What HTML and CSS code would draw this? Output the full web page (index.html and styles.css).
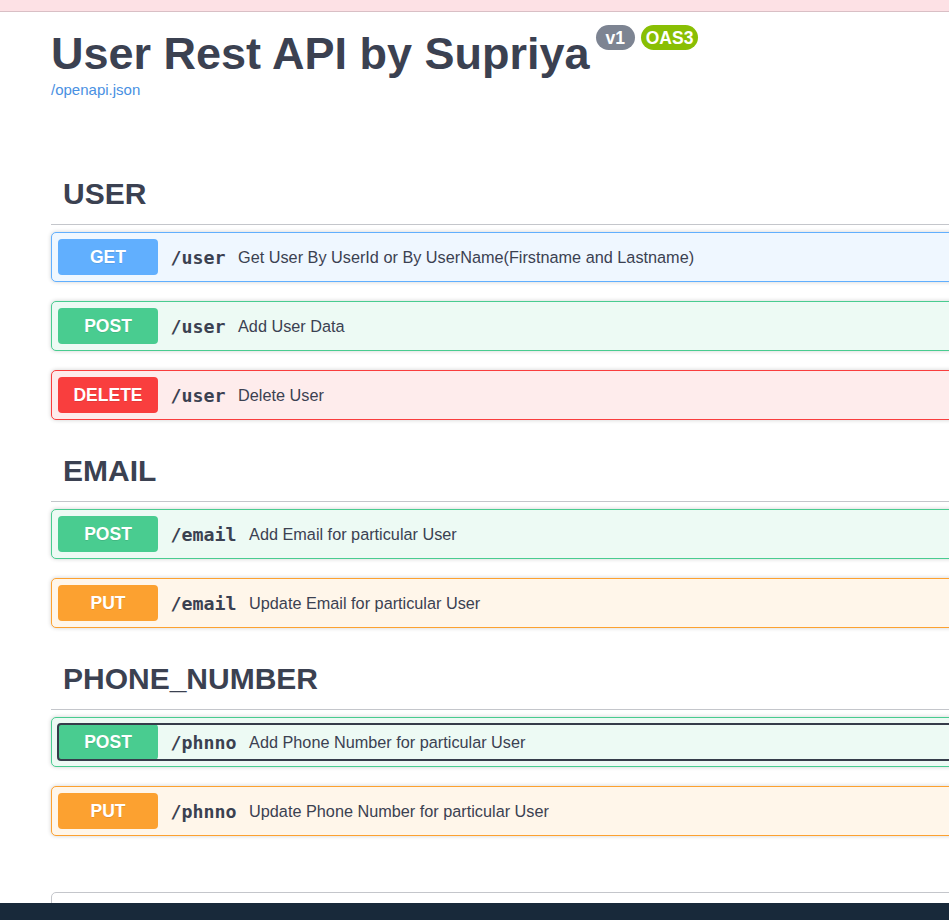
FILE: index.html
```html
<!DOCTYPE html>
<html lang="en">
<head>
<meta charset="utf-8">
<title>User Rest API by Supriya</title>
<link rel="stylesheet" href="styles.css">
</head>
<body>
<div class="topband"></div>
<div class="wrapper">
  <div class="info">
    <h2 class="title"><span class="title-text">User Rest API by Supriya</span><span class="stamp stamp-version"> v1 </span><span class="stamp stamp-oas">OAS3</span></h2>
    <a class="url" href="#">/openapi.json</a>
  </div>
  <div class="tags">
    <section class="tag-section">
      <h3 class="tag">USER</h3>
      <div class="op op-get"><div class="summary"><span class="method">GET</span><span class="path">/user</span><span class="desc">Get User By UserId or By UserName(Firstname and Lastname)</span></div></div>
      <div class="op op-post"><div class="summary"><span class="method">POST</span><span class="path">/user</span><span class="desc">Add User Data</span></div></div>
      <div class="op op-delete"><div class="summary"><span class="method">DELETE</span><span class="path">/user</span><span class="desc">Delete User</span></div></div>
    </section>
    <section class="tag-section">
      <h3 class="tag">EMAIL</h3>
      <div class="op op-post"><div class="summary"><span class="method">POST</span><span class="path">/email</span><span class="desc">Add Email for particular User</span></div></div>
      <div class="op op-put"><div class="summary"><span class="method">PUT</span><span class="path">/email</span><span class="desc">Update Email for particular User</span></div></div>
    </section>
    <section class="tag-section">
      <h3 class="tag">PHONE_NUMBER</h3>
      <div class="op op-post"><div class="summary focused"><span class="method">POST</span><span class="path">/phnno</span><span class="desc">Add Phone Number for particular User</span></div></div>
      <div class="op op-put"><div class="summary"><span class="method">PUT</span><span class="path">/phnno</span><span class="desc">Update Phone Number for particular User</span></div></div>
    </section>
  </div>
  <div class="models"></div>
</div>
<div class="taskbar"></div>
</body>
</html>
```
FILE: styles.css
```css
* { box-sizing: border-box; }
html, body { margin: 0; padding: 0; height: 100%; overflow: hidden; background: #fff; }
body { font-family: "Liberation Sans", Arial, sans-serif; color: #3b4151; }

.topband { height: 12px; background: #fde1e5; border-bottom: 1px solid #d9bfc5; }

.wrapper { padding-left: 51px; width: 1150px; display: flex; flex-direction: column; }

.info { padding-top: 15.5px; }
.title { margin: 0; display: flex; align-items: flex-start; font-size: 45px; line-height: 52px; font-weight: 700; color: #3b4151; }
.stamp { margin-top: -2.5px; margin-left: 6px; padding: 2.5px 5px; border-radius: 70px; font-size: 17.5px; line-height: 20px; color: #fff; white-space: pre; font-weight: 700; }
.stamp-version { background: #7d8492; }
.stamp-oas { background: #89bf04; }
.url { display: block; width: max-content; margin-top: 1px; font-size: 15px; line-height: 17px; color: #4990e2; text-decoration: none; }

.tags { margin-top: 66.5px; display: flex; flex-direction: column; }
.tag-section { display: flex; flex-direction: column; margin-bottom: 2px; }
.tag { margin: 0 0 7px; height: 61px; padding: 12px 25px 12px 12px; font-size: 30px; line-height: 36px; font-weight: 700; border-bottom: 1px solid #c4c6cb; }

.op { height: 50px; margin-bottom: 19px; padding: 6px; border: 1px solid; border-radius: 5px; box-shadow: 0 0 4px rgba(0, 0, 0, .19); }
.summary { display: flex; align-items: center; height: 36px; }
.summary.focused { outline: 2px solid #363c4a; outline-offset: -1px; border-radius: 3px; }
.method { flex: none; width: 100px; height: 36px; display: flex; align-items: center; justify-content: center; border-radius: 4px; color: #fff; font-size: 17.5px; font-weight: 700; text-shadow: 0 1px 0 rgba(0, 0, 0, .1); }
.path { flex: none; padding: 0 12.5px; font-family: "DejaVu Sans Mono", "Liberation Mono", monospace; font-weight: 700; font-size: 18.3px; color: #3b4151; }
.desc { font-size: 16.25px; color: #3b4151; }

.op-get { background: #eff7ff; border-color: #61affe; }
.op-get .method { background: #61affe; }
.op-post { background: #edfaf4; border-color: #49cc90; }
.op-post .method { background: #49cc90; }
.op-delete { background: #feecec; border-color: #f93e3e; }
.op-delete .method { background: #f93e3e; }
.op-put { background: #fff6ea; border-color: #fca130; }
.op-put .method { background: #fca130; }

.models { margin-top: 35px; height: 200px; flex: none; border: 1px solid #c4c6cb; border-radius: 5px; }

.taskbar { position: fixed; left: 0; right: 0; top: 903px; bottom: 0; background: #18293a; }
```
